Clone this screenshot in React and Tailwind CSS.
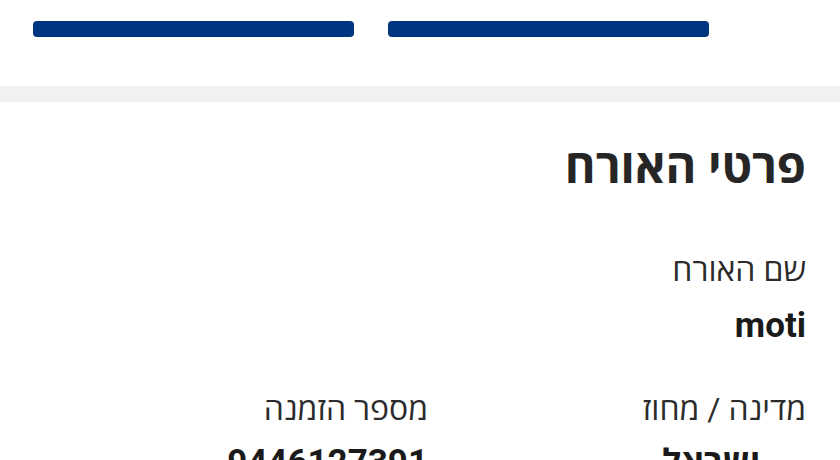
import React from "react";

const guest = {
  name: "moti",
  country: "ישראל",
  booking: "9446127391",
};

function IsraelFlag() {
  return (
    <svg width="36" height="20" viewBox="0 0 36 26" className="shrink-0">
      <rect width="36" height="26" fill="#fff" stroke="#ddd" />
      <rect y="3" width="36" height="3" fill="#0038b8" />
      <rect y="20" width="36" height="3" fill="#0038b8" />
      <path d="M18 8 L22 15 L14 15 Z M18 18 L14 11 L22 11 Z" fill="none" stroke="#0038b8" strokeWidth="1.2" />
    </svg>
  );
}

function Field({ label, value, icon, gap = "mt-[15px]" }) {
  return (
    <div className="flex flex-col items-start">
      <span className="text-[32px] leading-[40px] text-[#2b2b2b]">{label}</span>
      <div className={`${gap} flex items-end gap-[10px] h-[42px]`}>
        {icon}
        <span className="text-[35px] leading-[42px] font-bold text-[#1a1a1a]">{value}</span>
      </div>
    </div>
  );
}

export default function App() {
  return (
    <div
      dir="rtl"
      className="w-[840px] h-[460px] overflow-hidden bg-white"
      style={{ fontFamily: 'Roboto, "Open Sans", "DejaVu Sans", sans-serif' }}
    >
      {/* action buttons, still loading */}
      <div dir="ltr" className="h-[86px] flex gap-[34px] pl-[33px] pt-[21px]">
        <div className="w-[321px] h-4 rounded-[4px] bg-[#003580]" />
        <div className="w-[321px] h-4 rounded-[4px] bg-[#003580]" />
      </div>

      <div className="h-4 bg-[#f1f1f1]" />

      <div className="pr-[34px] pl-[50px] pt-[37px]">
        <h2 className="text-[47px] leading-[56px] font-bold text-[#262626]">פרטי האורח</h2>

        <div className="mt-[55px]">
          <Field label="שם האורח" value={guest.name} />
        </div>

        <div className="mt-[42px] grid grid-cols-2">
          <Field label="מדינה / מחוז" value={guest.country} icon={<IsraelFlag />} gap="mt-[13px]" />
          <Field label="מספר הזמנה" value={guest.booking} gap="mt-[13px]" />
        </div>
      </div>
    </div>
  );
}
